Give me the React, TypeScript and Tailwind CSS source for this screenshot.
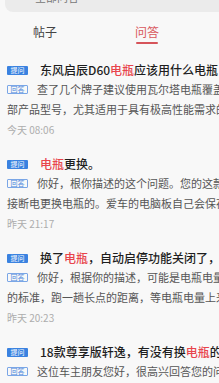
import React from "react";

type Item = {
  title: React.ReactNode;
  line1: string;
  line2: string;
  date: string;
};

const Red = ({ children }: { children: React.ReactNode }) => (
  <span className="text-[#e8444c]">{children}</span>
);

const items: Item[] = [
  {
    title: (
      <>
        东风启辰D60<Red>电瓶</Red>应该用什么电瓶
      </>
    ),
    line1: "查了几个牌子建议使用瓦尔塔电瓶覆盖全",
    line2: "部产品型号，尤其适用于具有极高性能需求的车型",
    date: "今天 08:06",
  },
  {
    title: (
      <>
        <Red>电瓶</Red>更换。
      </>
    ),
    line1: "你好，根你描述的这个问题。您的这款车",
    line2: "接断电更换电瓶的。爱车的电脑板自己会保存数据",
    date: "昨天 21:17",
  },
  {
    title: (
      <>
        换了<Red>电瓶</Red>，自动启停功能关闭了，
      </>
    ),
    line1: "你好，根据你的描述，可能是电瓶电量没",
    line2: "的标准，跑一趟长点的距离，等电瓶电量上来就好",
    date: "昨天 20:23",
  },
  {
    title: (
      <>
        18款尊享版轩逸，有没有换<Red>电瓶</Red>的
      </>
    ),
    line1: "这位车主朋友您好，很高兴回答您的问题",
    line2: "",
    date: "",
  },
];

const font = { fontFamily: '"Noto Sans CJK SC", "Noto Sans", sans-serif' };

export default function App() {
  return (
    <div
      className="h-[383px] w-[219px] overflow-hidden bg-[#f8f8f8]"
      style={font}
    >
      <div className="h-[12px] pl-[5px]">
        <div className="h-full overflow-hidden rounded-bl-[8px] bg-[#ebebeb]">
          <div className="-mt-[9px] ml-[30px] whitespace-nowrap text-[11px] leading-[12px] text-[#777]">
            全部问答
          </div>
        </div>
      </div>
      <div className="flex pt-[12px]">
        <div className="ml-[33px] flex flex-col items-center">
          <div className="text-[12px] leading-[16px] text-[#444]">帖子</div>
        </div>
        <div className="ml-[78px] flex flex-col items-center">
          <div className="text-[12px] leading-[16px] text-[#d9575d]">问答</div>
          <div className="mt-[2px] h-[2px] w-[22px] rounded-full bg-[#d6545a]" />
        </div>
      </div>
      <div className="pt-[17px]">
        {items.map((it, i) => (
          <div key={i} className="pb-[14px] pl-[7px]">
            <div className="flex h-[18px] items-center whitespace-nowrap">
              <span className="flex h-[9px] w-[21px] shrink-0 items-center justify-center rounded-[1px] bg-[#3a82e0] text-[7px] leading-none text-white">
                提问
              </span>
              <span className="ml-[12px] text-[12px] font-medium leading-[18px] text-[#1e1e1e]">
                {it.title}
              </span>
            </div>
            <div className="flex h-[20px] items-center whitespace-nowrap">
              <span className="flex h-[9px] w-[21px] shrink-0 items-center justify-center rounded-[1px] border border-[#7aa6e6] text-[7px] leading-none text-[#4a86dc]">
                回答
              </span>
              <span className="ml-[9px] text-[11px] leading-[20px] text-[#555]">
                {it.line1}
              </span>
            </div>
            <div className="h-[20px] whitespace-nowrap text-[11px] leading-[20px] text-[#555]">
              {it.line2}
            </div>
            <div className="h-[22px] whitespace-nowrap text-[10px] leading-[22px] text-[#adadad]">
              {it.date}
            </div>
          </div>
        ))}
      </div>
    </div>
  );
}
